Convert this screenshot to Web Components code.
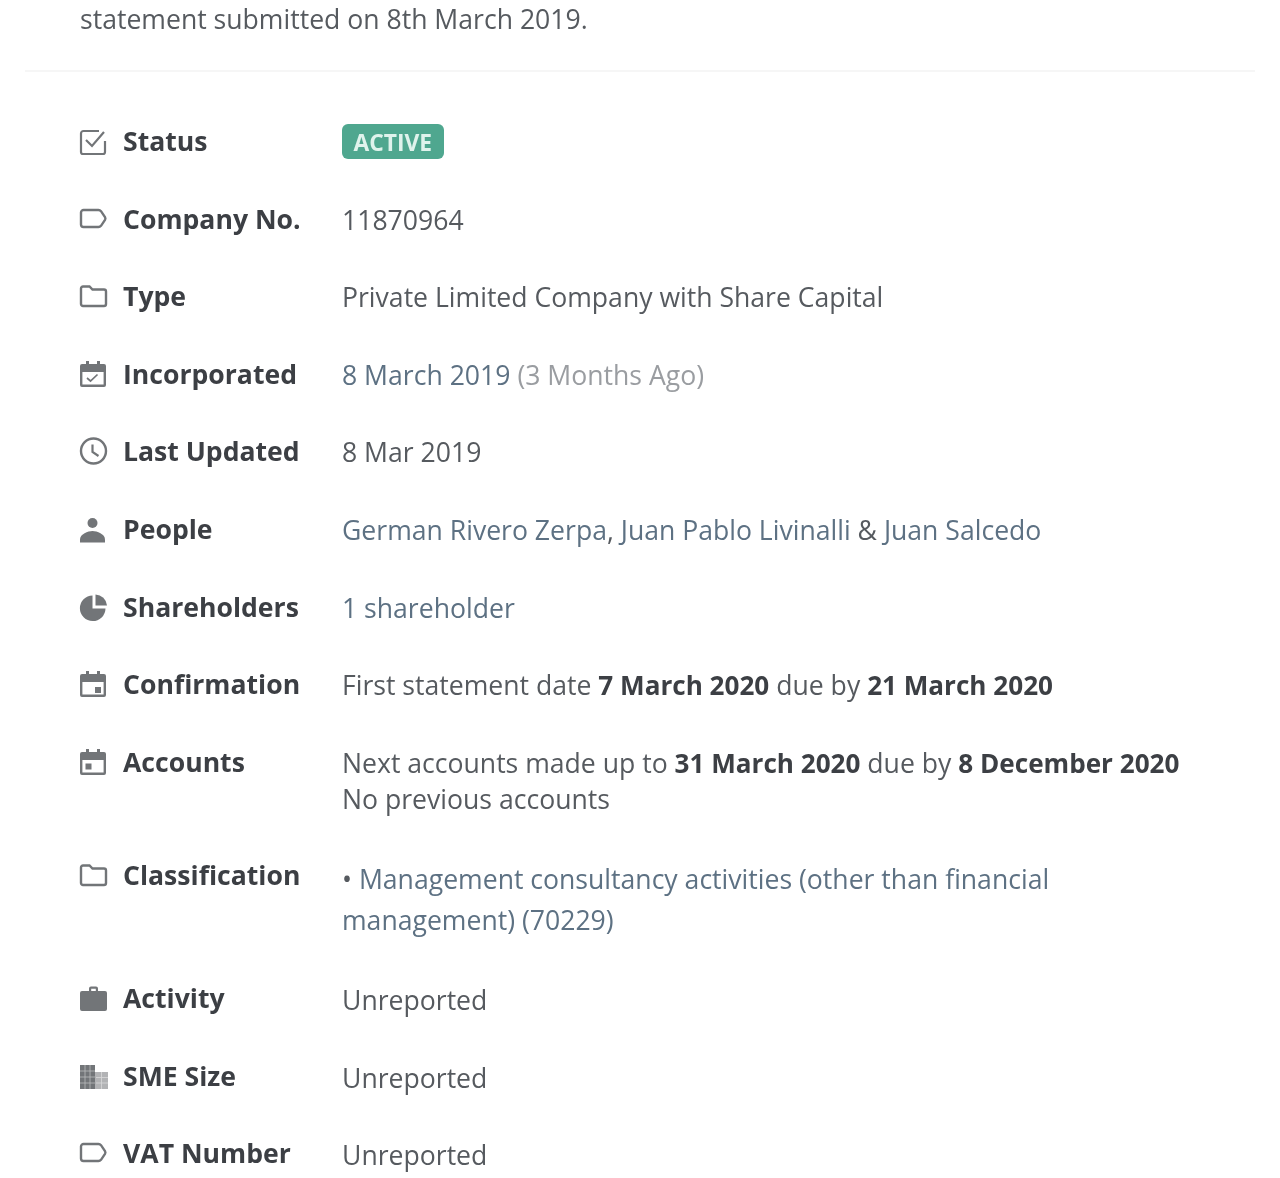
<!doctype html>
<html lang="en"><head><meta charset="utf-8"><title>Company profile</title>
<style>html,body{margin:0;background:#fff}body{width:1280px;height:1178px;overflow:hidden}</style>
</head><body>
<company-profile>
<span slot="intro">statement submitted on 8th March 2019.</span>
<info-row icon="check" label="Status"><status-badge>ACTIVE</status-badge></info-row>
<info-row icon="tag" label="Company No.">11870964</info-row>
<info-row icon="folder" label="Type">Private Limited Company with Share Capital</info-row>
<info-row icon="cal-check" label="Incorporated"><a>8 March 2019</a> <em>(3 Months Ago)</em></info-row>
<info-row icon="clock" label="Last Updated">8 Mar 2019</info-row>
<info-row icon="person" label="People"><a>German Rivero Zerpa</a>, <a>Juan Pablo Livinalli</a> &amp; <a>Juan Salcedo</a></info-row>
<info-row icon="pie" label="Shareholders"><a>1 shareholder</a></info-row>
<info-row icon="cal-dot-r" label="Confirmation">First statement date <b>7 March 2020</b> due by <b>21 March 2020</b></info-row>
<info-row icon="cal-dot-l" label="Accounts">Next accounts made up to <b>31 March 2020</b> due by <b>8 December 2020</b><br>No previous accounts</info-row>
<info-row icon="folder" label="Classification" style="--lh:41px;--vt:2px;--mb:38.600px">• <a>Management consultancy activities (other than financial management) (70229)</a></info-row>
<info-row icon="case" label="Activity" style="--vt:2px;--mb:39.600px">Unreported</info-row>
<info-row icon="building" label="SME Size" style="--vt:2px;--mb:39.600px">Unreported</info-row>
<info-row icon="tag" label="VAT Number" style="--vt:2px;--mb:0px">Unreported</info-row>
</company-profile>
<script>
const CAL='M1 6a2 2 0 0 1 2-2h4V1h3v3h8V1h3v3h4a2 2 0 0 1 2 2v19a2 2 0 0 1-2 2H3a2 2 0 0 1-2-2zm2.400 6v12.600h21.200V12z';
const ICONS={
check:'<path d="M20 4H4.500A2.500 2.500 0 0 0 2 6.500V25a2 2 0 0 0 2 2h20a2 2 0 0 0 2-2V14" fill="none" stroke="currentColor" stroke-width="2.200"/><path d="M7 13l6 6L25 5" fill="none" stroke="currentColor" stroke-width="2.200"/>',
tag:'<path d="M4.500 5h15q1.500 0 2.500 1.200l4 6q.8 1.300 0 2.600l-4 6q-1 1.200-2.500 1.200h-15A2.500 2.500 0 0 1 2 19.500v-12A2.500 2.500 0 0 1 4.500 5z" fill="none" stroke="currentColor" stroke-width="2.400"/>',
folder:'<path d="M2 6.500a2 2 0 0 1 2-2h6.500l3 3H25a2 2 0 0 1 2 2V22a2 2 0 0 1-2 2H4a2 2 0 0 1-2-2z" fill="none" stroke="currentColor" stroke-width="2.400"/>',
'cal-check':`<path d="${CAL}" fill="currentColor" fill-rule="evenodd"/><path d="M8 18l3.500 3 7-6.500" fill="none" stroke="currentColor" stroke-width="1.700"/>`,
clock:'<circle cx="14.500" cy="14" r="12.500" fill="none" stroke="currentColor" stroke-width="2.400"/><path d="M13.500 7.500v7.500l6 4" fill="none" stroke="currentColor" stroke-width="2.200"/>',
person:'<circle cx="13.500" cy="8" r="5" fill="currentColor"/><path d="M1 27.500v-3C1 19 9 16 13.500 16s12.500 3 12.500 8.500v3z" fill="currentColor"/>',
pie:'<path d="M13.500 2.500v13h13A12.800 12.800 0 1 1 13.500 2.500z" fill="currentColor"/><path d="M16.500 1.500A12 12 0 0 1 28 12.500H16.500z" fill="currentColor"/>',
'cal-dot-r':`<path d="${CAL}" fill="currentColor" fill-rule="evenodd"/><rect x="16" y="17" width="6" height="6" fill="currentColor"/>`,
'cal-dot-l':`<path d="${CAL}" fill="currentColor" fill-rule="evenodd"/><rect x="6.500" y="15.500" width="6" height="6" fill="currentColor"/>`,
case:'<path d="M10 7V4.500a2 2 0 0 1 2-2h5a2 2 0 0 1 2 2V7h7a2 2 0 0 1 2 2v16a2 2 0 0 1-2 2H3a2 2 0 0 1-2-2V9a2 2 0 0 1 2-2zm2.200 0h4.600V4.700h-4.600z" fill="currentColor" fill-rule="evenodd"/>',
building:'<path d="M1 3h15v24H1z" fill="currentColor"/><path d="M16 10h13v17H16z" fill="currentColor" opacity=".55"/><path d="M1 9h15M1 15h15M1 21h15M6 3v24M11 3v24M17 15.500h12M17 21h12M22.500 10v17" stroke="#fff" stroke-width=".8" opacity=".5"/>'
};
class RowIcon extends HTMLElement{
  connectedCallback(){
    const r=this.shadowRoot||this.attachShadow({mode:'open'});
    r.innerHTML=`<style>:host{display:block;width:28px;height:28px;color:#727578}svg{display:block;width:28px;height:28px;overflow:visible}</style><svg viewBox="0 0 28 28" aria-hidden="true">${ICONS[this.getAttribute('name')]||''}</svg>`;
  }
}
class StatusBadge extends HTMLElement{
  constructor(){super();this.attachShadow({mode:'open'}).innerHTML=`<style>:host{display:inline-block;background:#4fa78f;color:#dff3ec;font-weight:700;font-size:22.800px;line-height:37px;height:35px;padding:0 11.500px;border-radius:6px;vertical-align:top}</style><slot></slot>`}
}
class InfoRow extends HTMLElement{
  connectedCallback(){
    if(this.shadowRoot)return;
    const r=this.attachShadow({mode:'open'});
    r.innerHTML=`<style>
    :host{display:grid;grid-template-columns:43px 220px minmax(0,860px);padding-left:79px;margin-bottom:var(--mb,40.600px);font:400 26.600px/36px "Open Sans",sans-serif;color:#565a5f}
    .ico{padding-top:4px}
    .label{font-weight:700;color:#3c3f44;margin-left:1px}
    .val{padding-top:var(--vt,1px);line-height:var(--lh,36px)}
    ::slotted(a){color:#5d7183}
    ::slotted(em){font-style:normal;color:#9a9da1}
    ::slotted(b){font-weight:700;font-size:26.100px;color:#3c3f44}
    </style><div class="ico"><row-icon name="${this.getAttribute('icon')}"></row-icon></div><div class="label">${this.getAttribute('label')}</div><div class="val"><slot></slot></div>`;
  }
}
class CompanyProfile extends HTMLElement{
  constructor(){super();this.attachShadow({mode:'open'}).innerHTML=`<style>
  :host{display:block;filter:blur(.5px)}
  .intro{padding:1px 0 0 80px;font:400 26.600px/36px "Open Sans",sans-serif;color:#565a5f}
  hr{border:0;height:2px;background:#f6f6f6;margin:33px 25px 51px}
  </style><div class="intro"><slot name="intro"></slot></div><hr><slot></slot>`}
}
customElements.define('row-icon',RowIcon);
customElements.define('status-badge',StatusBadge);
customElements.define('info-row',InfoRow);
customElements.define('company-profile',CompanyProfile);
</script>
</body></html>
